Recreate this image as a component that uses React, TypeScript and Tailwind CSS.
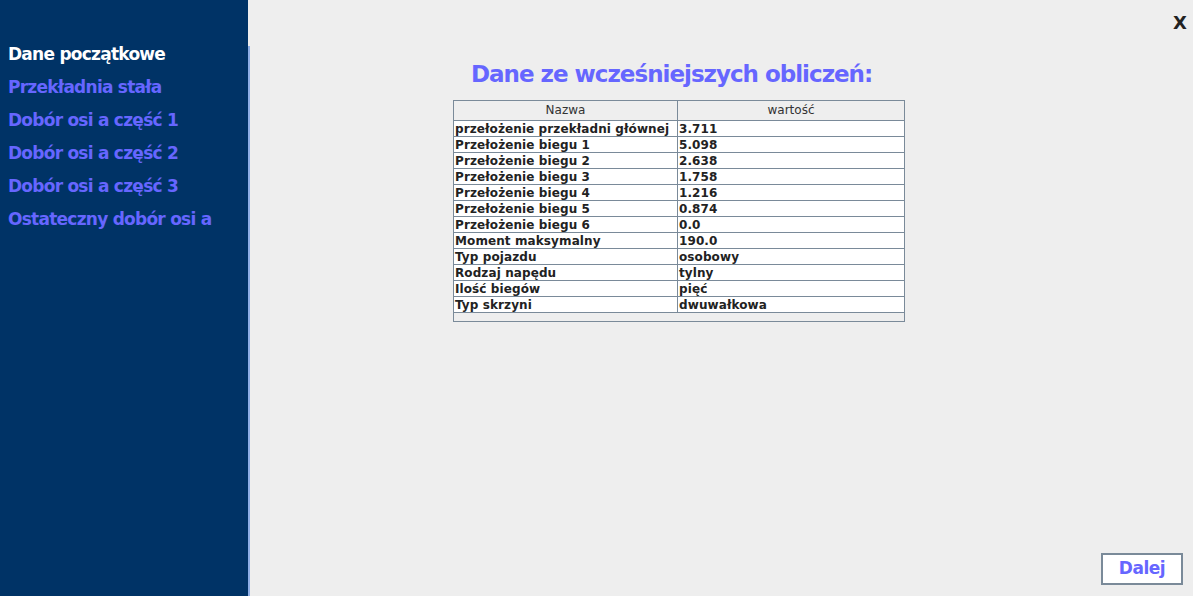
import React from 'react'

const menu = [
  'Dane początkowe',
  'Przekładnia stała',
  'Dobór osi a część 1',
  'Dobór osi a część 2',
  'Dobór osi a część 3',
  'Ostateczny dobór osi a',
]

const rows: [string, string][] = [
  ['przełożenie przekładni głównej', '3.711'],
  ['Przełożenie biegu 1', '5.098'],
  ['Przełożenie biegu 2', '2.638'],
  ['Przełożenie biegu 3', '1.758'],
  ['Przełożenie biegu 4', '1.216'],
  ['Przełożenie biegu 5', '0.874'],
  ['Przełożenie biegu 6', '0.0'],
  ['Moment maksymalny', '190.0'],
  ['Typ pojazdu', 'osobowy'],
  ['Rodzaj napędu', 'tylny'],
  ['Ilość biegów', 'pięć'],
  ['Typ skrzyni', 'dwuwałkowa'],
]

const font = { fontFamily: '"DejaVu Sans", Verdana, sans-serif' }

export default function App() {
  return (
    <div className="flex h-[596px] w-[1193px] overflow-hidden bg-[#eeeeee]" style={font}>
      {/* Menu boczne */}
      <div className="flex w-[248px] shrink-0 flex-col bg-[#003366] pl-2 pt-[42px]">
        {menu.map((item, i) => (
          <div
            key={item}
            className={`h-[33px] text-[17px] font-bold leading-[24px] tracking-[-0.75px] ${i === 0 ? 'text-white' : 'text-[#6666ff]'}`}
          >
            {item}
          </div>
        ))}
      </div>
      <div className="flex w-[2px] shrink-0 flex-col">
        <div className="h-[46px]" />
        <div className="flex-1 bg-[#8eaee6]" />
      </div>

      {/* Zawartość */}
      <div className="flex flex-1 flex-col">
        <div className="flex h-[46px] justify-end pr-[6px] pt-[12px]">
          <span className="text-[18px] font-bold leading-[22px] text-[#222222]">X</span>
        </div>
        <div className="flex flex-col pl-[203px]">
          <h1 className="ml-[18px] mt-[14px] h-[40px] text-[23px] font-bold leading-[28px] tracking-[-1px] text-[#6666ff]">
            Dane ze wcześniejszych obliczeń:
          </h1>
          <div className="flex h-[222px] w-[452px] flex-col border border-[#7a8a99] bg-[#eeeeee]">
            <div className="flex h-[20px] border-b border-[#7a8a99] text-[12px] leading-[19px] text-[#333333]">
              <div className="w-[224px] border-r border-[#7a8a99] text-center">Nazwa</div>
              <div className="flex-1 text-center">wartość</div>
            </div>
            {rows.map(([name, value]) => (
              <div key={name} className="flex h-[16px] border-b border-[#7a8a99] bg-white text-[12px] font-bold leading-[16px] tracking-[0.1px] text-[#222222]">
                <div className="w-[224px] border-r border-[#7a8a99] pl-[1px]">{name}</div>
                <div className="flex-1 pl-[1px]">{value}</div>
              </div>
            ))}
          </div>
        </div>
        <div className="mt-auto flex justify-end pb-[11px] pr-[10px]">
          <button className="h-[32px] w-[82px] border-2 border-[#7a8a99] bg-white text-[17px] font-bold tracking-[-0.5px] text-[#6666ff]">
            Dalej
          </button>
        </div>
      </div>
    </div>
  )
}
